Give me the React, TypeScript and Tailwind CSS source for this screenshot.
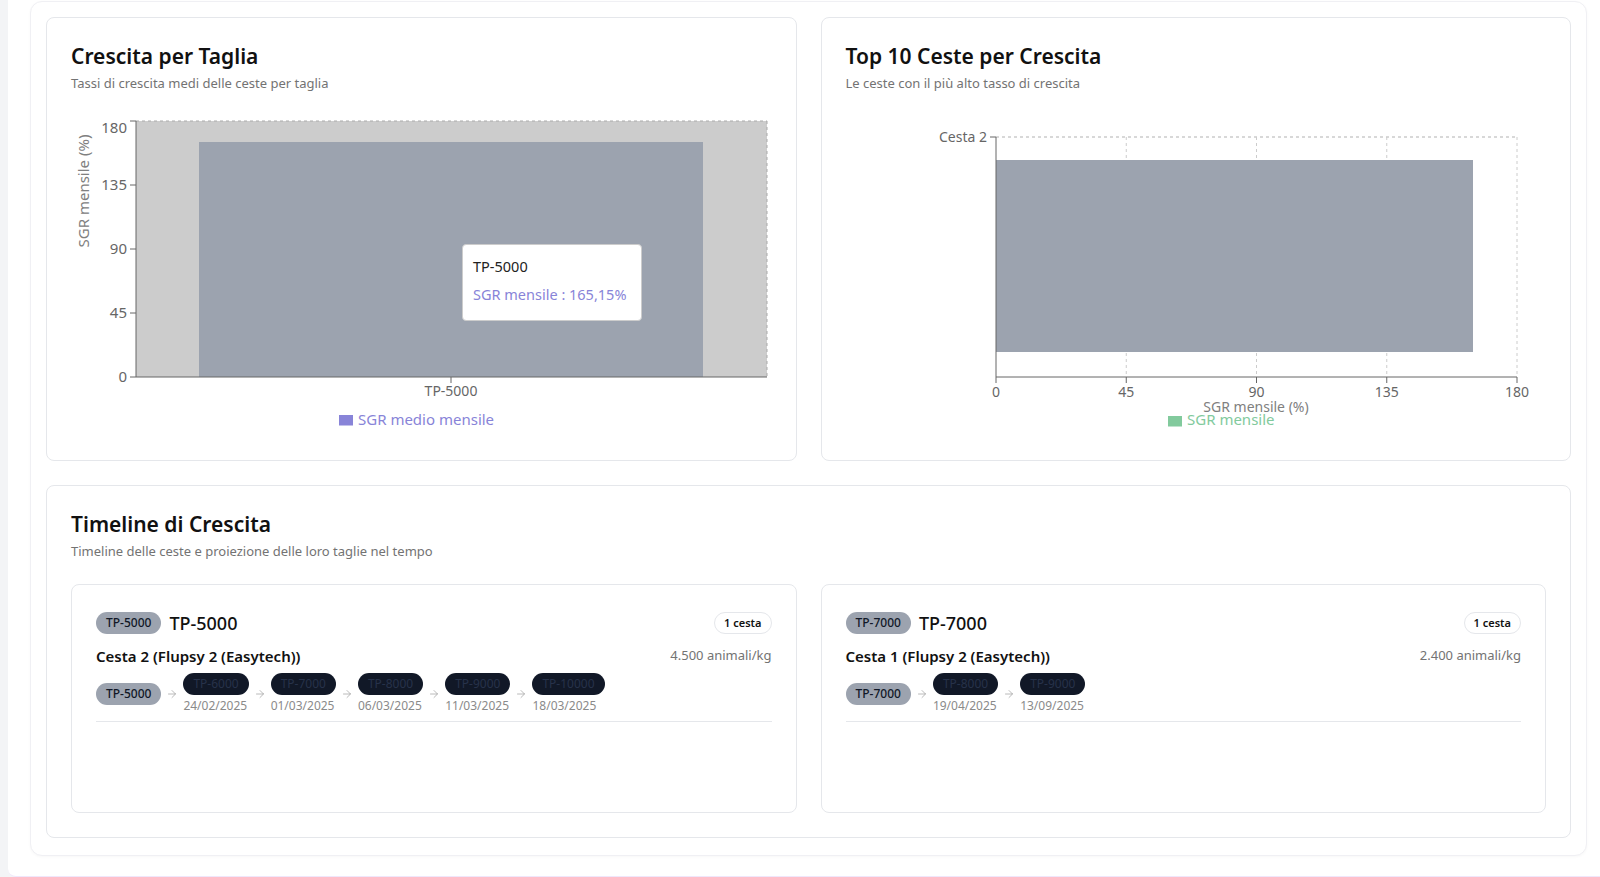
import * as React from "react";
import { ArrowRight } from "lucide-react";

type Step = { size: string; date: string };
type Group = { size: string; cesta: string; density: string; steps: Step[] };

const groups: Group[] = [
  {
    size: "TP-5000",
    cesta: "Cesta 2 (Flupsy 2 (Easytech))",
    density: "4.500 animali/kg",
    steps: [
      { size: "TP-6000", date: "24/02/2025" },
      { size: "TP-7000", date: "01/03/2025" },
      { size: "TP-8000", date: "06/03/2025" },
      { size: "TP-9000", date: "11/03/2025" },
      { size: "TP-10000", date: "18/03/2025" },
    ],
  },
  {
    size: "TP-7000",
    cesta: "Cesta 1 (Flupsy 2 (Easytech))",
    density: "2.400 animali/kg",
    steps: [
      { size: "TP-8000", date: "19/04/2025" },
      { size: "TP-9000", date: "13/09/2025" },
    ],
  },
];

const chartFont = "'Noto Sans', sans-serif";

function CardHeader({ title, subtitle }: { title: string; subtitle: string }) {
  return (
    <div>
      <h2 className="text-[21px] font-semibold leading-7 text-[#111]">{title}</h2>
      <p className="mt-[3px] text-[13px] leading-5 text-[#737373]">{subtitle}</p>
    </div>
  );
}

function SizeChart() {
  const ticks = [0, 45, 90, 135, 180];
  return (
    <div className="relative mt-[7px] h-[336px]">
      <svg width="701" height="336" viewBox="0 0 701 336" fontFamily={chartFont}>
        <rect x={65} y={21} width={631} height={256} fill="#cccccc" />
        <rect x={128} y={42} width={504} height={235} fill="#9ca3af" />
        <line x1={65} y1={21} x2={696} y2={21} stroke="#aaa" strokeDasharray="3 3" />
        <line x1={696} y1={21} x2={696} y2={277} stroke="#aaa" strokeDasharray="3 3" />
        <line x1={65} y1={21} x2={65} y2={277} stroke="#666" />
        {ticks.map((v) => {
          const y = 277 - (v / 180) * 256;
          return (
            <g key={v}>
              <line x1={59} y1={y} x2={65} y2={y} stroke="#666" />
              <text x={56} y={v === 180 ? y + 12 : y + 5} textAnchor="end" fontSize={15} fill="#666">
                {v}
              </text>
            </g>
          );
        })}
        <line x1={65} y1={277} x2={696} y2={277} stroke="#666" />
        <line x1={380} y1={277} x2={380} y2={283} stroke="#666" />
        <text x={380} y={296} textAnchor="middle" fontSize={14} fill="#666">
          TP-5000
        </text>
        <text
          x={12}
          y={91}
          transform="rotate(-90 12 91)"
          textAnchor="middle"
          dominantBaseline="central"
          fontSize={15}
          fill="#808080"
        >
          SGR mensile (%)
        </text>
        <rect x={268} y={315} width={14} height={10.5} fill="#8884d8" />
        <text x={287} y={325} fontSize={15} fill="#8884d8">
          SGR medio mensile
        </text>
      </svg>
      <div className="absolute left-[391px] top-[144px] h-[77px] w-[180px] whitespace-nowrap rounded border border-[#ccc] bg-white px-[10px] pt-[11px] text-[14.5px]">
        <div className="leading-5 text-[#222]">TP-5000</div>
        <div className="mt-[8px] leading-5 text-[#8884d8]">SGR mensile : 165,15%</div>
      </div>
    </div>
  );
}

function TopChart() {
  const ticks = [0, 45, 90, 135, 180];
  const xOf = (v: number) => 150 + (v / 180) * 521;
  return (
    <div className="mt-[7px] h-[336px]">
      <svg width="700" height="336" viewBox="0 0 700 336" fontFamily={chartFont}>
        <line x1={150} y1={37} x2={671} y2={37} stroke="#ccc" strokeDasharray="3 3" strokeWidth={1.5} />
        {ticks.slice(1).map((v) => (
          <line key={v} x1={xOf(v)} y1={37} x2={xOf(v)} y2={277} stroke="#ccc" strokeDasharray="3 3" />
        ))}
        <rect x={150} y={60} width={477} height={192} fill="#9ca3af" />
        <line x1={150} y1={37} x2={150} y2={277} stroke="#666" />
        <line x1={144} y1={37} x2={150} y2={37} stroke="#666" />
        <text x={141} y={42} textAnchor="end" fontSize={14} fill="#666">
          Cesta 2
        </text>
        <line x1={150} y1={277} x2={671} y2={277} stroke="#666" />
        {ticks.map((v) => (
          <g key={v}>
            <line x1={xOf(v)} y1={277} x2={xOf(v)} y2={283} stroke="#666" />
            <text x={xOf(v)} y={297} textAnchor="middle" fontSize={14} fill="#666">
              {v}
            </text>
          </g>
        ))}
        <text x={410} y={312} textAnchor="middle" fontSize={14} fill="#808080">
          SGR mensile (%)
        </text>
        <rect x={322} y={316} width={14} height={10.5} fill="#82ca9d" />
        <text x={341} y={325} fontSize={15} fill="#82ca9d">
          SGR mensile
        </text>
      </svg>
    </div>
  );
}

function GrayPill({ children }: { children: React.ReactNode }) {
  return (
    <span className="inline-flex h-[22px] items-center rounded-full bg-[#9ca3af] px-[10px] text-xs font-medium text-[#111827]">
      {children}
    </span>
  );
}

function TimelineCard({ group }: { group: Group }) {
  return (
    <div className="h-[229px] rounded-lg border border-[#e5e7eb] bg-white px-6 pt-6">
      <div className="flex h-7 items-center justify-between">
        <div className="flex items-center gap-2">
          <GrayPill>{group.size}</GrayPill>
          <span className="text-lg font-medium text-[#111]">{group.size}</span>
        </div>
        <span className="inline-flex h-[22px] items-center rounded-full border border-[#e5e7eb] px-[9px] text-[11px] font-semibold text-[#111]">
          1 cesta
        </span>
      </div>
      <div className="border-b border-[#e5e7eb] pb-[7px]">
        <div className="mt-2 flex items-center justify-between">
          <span className="text-[15px] font-semibold leading-[22px] text-[#111]">{group.cesta}</span>
          <span className="text-[13px] text-[#737373]">{group.density}</span>
        </div>
        <div className="mt-[6px] flex items-center gap-[5px]">
          <GrayPill>{group.size}</GrayPill>
          {group.steps.map((s) => (
            <React.Fragment key={s.size}>
              <ArrowRight size={12} strokeWidth={1.5} className="text-[#a3a3a3]" />
              <div className="flex flex-col items-start">
                <span className="inline-flex h-[22px] items-center rounded-full bg-[#111827] px-[10px] text-xs text-[#27324a]">
                  {s.size}
                </span>
                <span className="mt-[2px] text-xs leading-[17px] text-[#8a8a8a]">{s.date}</span>
              </div>
            </React.Fragment>
          ))}
        </div>
      </div>
    </div>
  );
}

export default function App() {
  return (
    <div className="flex h-[877px] w-[1600px] overflow-hidden bg-[#f3f4f6] font-['Noto_Sans',sans-serif]">
      <main className="ml-2 flex-1 rounded-bl-lg border-b border-[#efe7fb] bg-white pl-[22px] pr-[13px] pt-px">
        <div className="rounded-xl border border-[#f0f0f4] bg-white px-[15px] pb-[17px] pt-[15px] shadow-[0_1px_3px_rgba(0,0,0,0.03)]">
          <div className="grid grid-cols-2 gap-6">
            <div className="h-[444px] rounded-lg border border-[#e5e7eb] bg-white p-6">
              <CardHeader title="Crescita per Taglia" subtitle="Tassi di crescita medi delle ceste per taglia" />
              <SizeChart />
            </div>
            <div className="h-[444px] rounded-lg border border-[#e5e7eb] bg-white p-6">
              <CardHeader title="Top 10 Ceste per Crescita" subtitle="Le ceste con il più alto tasso di crescita" />
              <TopChart />
            </div>
          </div>
          <div className="mt-6 rounded-lg border border-[#e5e7eb] bg-white p-6">
            <CardHeader
              title="Timeline di Crescita"
              subtitle="Timeline delle ceste e proiezione delle loro taglie nel tempo"
            />
            <div className="mt-[23px] grid grid-cols-2 gap-6">
              {groups.map((g) => (
                <TimelineCard key={g.size} group={g} />
              ))}
            </div>
          </div>
        </div>
      </main>
    </div>
  );
}
